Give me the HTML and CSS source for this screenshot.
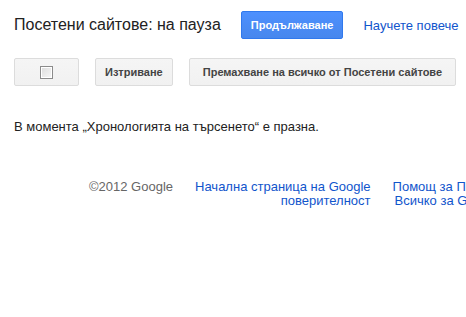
FILE: index.html
```html
<!DOCTYPE html>
<html lang="bg">
<head>
    <meta charset="utf-8">
    <title>Посетени сайтове</title>
    <link rel="stylesheet" href="styles.css">
</head>
<body>
<div class="page">
    <div class="head">
        <h1>Посетени сайтове: на пауза</h1>
        <button class="btn blue">Продължаване</button>
        <a href="#" class="more">Научете повече</a>
    </div>

    <div class="toolbar">
        <button class="btn check-btn"><span class="check"></span></button>
        <button class="btn">Изтриване</button>
        <button class="btn wide">Премахване на всичко от Посетени сайтове</button>
    </div>

    <p class="empty">В момента „Хронологията на търсенето“ е празна.</p>

    <div class="footer">
        <div class="copy">©2012 Google</div>
        <div class="col right">
            <a href="#">Начална страница на Google</a><br>
            <a href="#">поверителност</a>
        </div>
        <div class="col">
            <a href="#">Помощ за Поверителност</a><br>
            <a href="#" class="shift">Всичко за Google</a>
        </div>
    </div>
</div>
</body>
</html>
```

FILE: styles.css
```css
html, body { margin: 0; padding: 0; background: #fff; overflow: hidden; }
body { font-family: Arial, "Liberation Sans", sans-serif; color: #222; font-size: 13px; }
a { color: #15c; text-decoration: none; }
.page { padding: 11px 0 0 14px; width: 600px; }
.head { display: flex; align-items: center; height: 28px; }
h1 { margin: 0 20px 0 0; font-size: 16px; font-weight: normal; color: #222; }
.more { font-size: 13px; margin-left: 20px; }
.btn { font-family: Arial, "Liberation Sans", sans-serif; font-size: 11px; font-weight: bold; color: #444; height: 28px; padding: 0 9px; border: 1px solid #dcdcdc; border-radius: 2px; background: linear-gradient(#f5f5f5, #f1f1f1); cursor: pointer; }
.btn.blue { color: #fff; background: linear-gradient(#4d90fe, #4787ed); border-color: #3079ed; padding: 0 9px; }
.btn.wide { padding: 0 13px; }
.toolbar { display: flex; gap: 16px; margin-top: 19px; }
.check-btn { width: 65px; display: flex; align-items: center; justify-content: center; }
.check { display: block; width: 11px; height: 11px; border: 1px solid #8b8b8b; background: linear-gradient(135deg, #dcdcdc, #f7f7f7); box-shadow: inset 0 0 0 1px #fff; }
.empty { margin: 33px 0 0; }
.footer { display: flex; gap: 22px; margin-top: 46px; padding-left: 75px; line-height: 14px; white-space: nowrap; }
.copy { color: #666; }
.col.right { text-align: right; }
.shift { margin-left: 2px; }
```
